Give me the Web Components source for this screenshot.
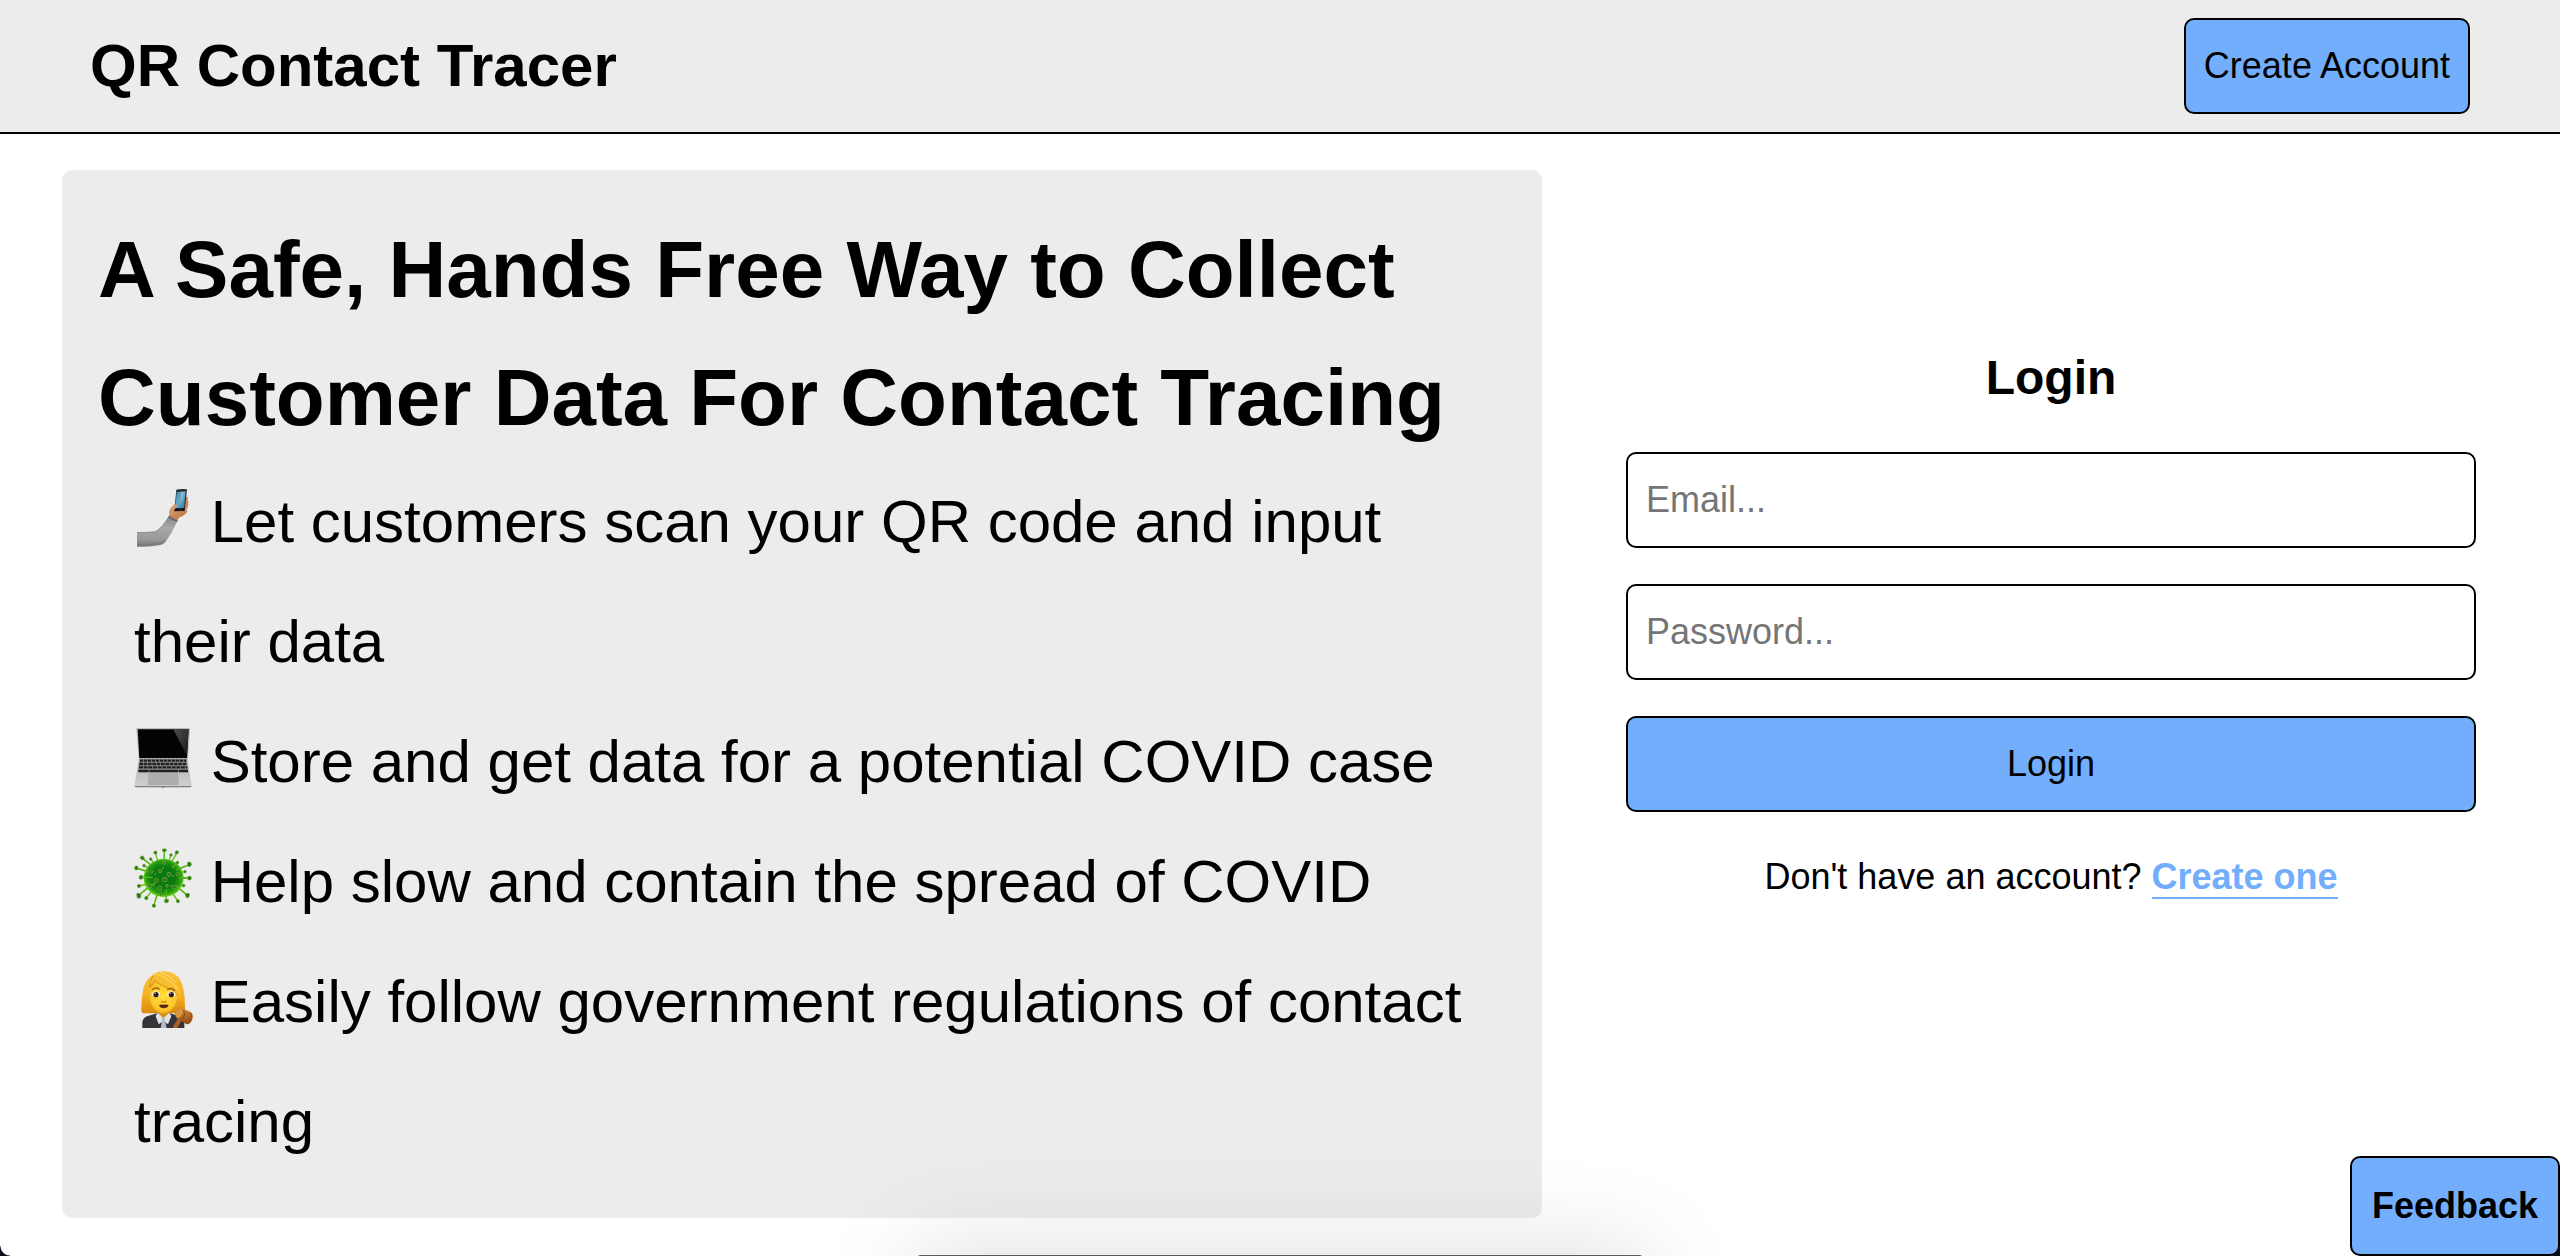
<!DOCTYPE html>
<html lang="en">
<head>
<meta charset="utf-8">
<title>QR Contact Tracer</title>
<style>
  html, body { margin: 0; }
  body {
    --panel: #ececec;
    --accent: #72aefc;
    font: 36px/56px "Liberation Sans", Arial, sans-serif;
    color: #000;
    background: #fff;
    min-height: 100vh;
  }
</style>
</head>
<body>
<qr-app></qr-app>

<template id="t-app">
  <style>
    :host { display: block; }
    main {
      display: grid;
      grid-template-columns: 1480fr 850fr;
      gap: 84px;
      padding: 36px 84px 36px 62px;
    }
    qr-login { align-self: center; padding-bottom: 144px; }
    .dock {
      position: fixed; left: 0; right: 0; bottom: -200px;
      width: 726px; height: 201px; margin: 0 auto;
      background: #5c5c5e; border-radius: 4px;
      box-shadow: 0 0 100px rgba(0,0,0,.15);
      pointer-events: none;
    }
    .corner {
      position: fixed; bottom: 0; left: 0; width: 10px; height: 10px;
      background: radial-gradient(circle at 100% 0, transparent 9px, #0b0f18 10px);
    }
    .corner.right { left: auto; right: 0; background: radial-gradient(circle at 0 0, transparent 9px, #0b0f18 10px); }
    qr-button.feedback { position: fixed; right: 0; bottom: 0; --pad: 20px; font-weight: 700; }
  </style>
  <qr-header><span>QR Contact Tracer</span><qr-button slot="action">Create Account</qr-button></qr-header>
  <main>
    <qr-pitch>
      <span slot="title">A Safe, Hands Free Way to Collect Customer Data For Contact Tracing</span>
      <qr-feature icon="selfie">Let customers scan your QR code and input their data</qr-feature>
      <qr-feature icon="laptop">Store and get data for a potential COVID case</qr-feature>
      <qr-feature icon="virus">Help slow and contain the spread of COVID</qr-feature>
      <qr-feature icon="judge">Easily follow government regulations of contact tracing</qr-feature>
    </qr-pitch>
    <qr-login></qr-login>
  </main>
  <div class="dock"></div>
  <div class="corner"></div>
  <div class="corner right"></div>
  <qr-button class="feedback">Feedback</qr-button>
</template>

<template id="t-header">
  <style>
    :host { display: block; }
    header {
      display: flex; align-items: center; justify-content: space-between;
      padding: 18px 90px; background: var(--panel); border-bottom: 2px solid #000;
    }
    h1 { margin: 0; font-size: 60px; line-height: 96px; }
  </style>
  <header><h1><slot></slot></h1><slot name="action"></slot></header>
</template>

<template id="t-button">
  <style>
    :host { display: block; }
    button {
      display: block; width: 100%; margin: 0; padding: var(--pad, 18px);
      font: inherit; color: inherit; background: var(--accent);
      border: 2px solid #000; border-radius: 10px; cursor: pointer;
    }
  </style>
  <button type="button"><slot></slot></button>
</template>

<template id="t-field">
  <style>
    :host { display: block; }
    label { position: absolute; width: 1px; height: 1px; overflow: hidden; clip-path: inset(50%); }
    input {
      display: block; box-sizing: border-box; width: 100%; height: 96px; margin: 0; padding: 18px;
      font: inherit; color: inherit; background: #fff;
      border: 2px solid #000; border-radius: 10px;
    }
    input::placeholder { color: #757575; }
  </style>
  <input id="field">
</template>

<template id="t-pitch">
  <style>
    :host { display: block; }
    section { padding: 36px; background: var(--panel); border-radius: 10px; }
    h2 { margin: 0; font-size: 80px; line-height: 128px; }
    .list { padding: 0 36px; font-size: 60px; line-height: 120px; }
  </style>
  <section>
    <h2><slot name="title"></slot></h2>
    <div class="list" role="list"><slot></slot></div>
  </section>
</template>

<template id="t-login">
  <style>
    :host { display: block; }
    form { display: flex; flex-direction: column; gap: 36px; }
    h3 { margin: 0; font-size: 48px; line-height: 77px; text-align: center; }
    p { margin: 0; line-height: 58px; text-align: center; }
    a { color: var(--accent); font-weight: 700; text-decoration: none; border-bottom: 2px solid var(--accent); }
  </style>
  <form>
    <h3>Login</h3>
    <qr-field type="email" name="Email"></qr-field>
    <qr-field type="password" name="Password"></qr-field>
    <qr-button>Login</qr-button>
    <p>Don't have an account? <a href="#create">Create one</a></p>
  </form>
</template>

<template id="t-feature">
  <style>
    :host { display: block; }
    svg { width: 60px; height: 60px; vertical-align: -6px; overflow: visible; }
  </style>
  <span class="icon"></span> <slot></slot>
</template>

<script>
  const icons = {
    selfie: `
      <defs>
        <linearGradient id="sl" x1="0" y1="0" x2="0" y2="1"><stop offset="0" stop-color="#8b8b8b"/><stop offset=".35" stop-color="#aaa8a9"/><stop offset=".75" stop-color="#999798"/><stop offset="1" stop-color="#777"/></linearGradient>
        <linearGradient id="sk" x1="0" y1="0" x2="1" y2="1"><stop offset="0" stop-color="#d9a071"/><stop offset="1" stop-color="#b87543"/></linearGradient>
        <linearGradient id="sc" x1="0" y1="0" x2="1" y2="1"><stop offset="0" stop-color="#3d7fa2"/><stop offset=".5" stop-color="#6ba9c7"/><stop offset="1" stop-color="#2f7298"/></linearGradient>
      </defs>
      <path d="M192 86q6-5 11-1 2 5-1 8 5 3 2 9 3 5-1 9 2 7-5 11l-10 4z" fill="#c98553"/>
      <path d="M51 189q32 1 55-2 9-4 18-15 11-13 20-27l28 12q-15 33-34 60-5 8-17 11-33 7-70 5z" fill="url(#sl)"/>
      <path d="M51 226q34 3 65-2 14-3 20-12" fill="none" stroke="#7a797a" stroke-width="3"/>
      <path d="M51 191q32 1 55-2 9-4 18-15" fill="none" stroke="#858485" stroke-width="2"/>
      <path d="M144 145q7 8 27 13l3-6q-19-7-26-14z" fill="#69676b"/>
      <path d="M149 139q-4-14 3-22 7-8 12-13l5 4-4 13 18 4 18-2q3 7-5 12-8 8-17 10l-7 8q-16-4-23-14z" fill="url(#sk)"/>
      <path d="M169 62q15-3 32-1l-7 64-31 1z" fill="#292a2d"/>
      <path d="M170 69l27-2-5 51-27 1z" fill="url(#sc)"/>
      <path d="M181 69l10-1-6 39z" fill="#9bc8dc" opacity=".6"/>
      <path d="M163 118l31-1-1 9-30 1z" fill="#171719"/>
      <path d="M154 120q4-12 14-14 4 2 1 8l-8 11z" fill="#d89b6b"/>
      <path d="M182 119q2 3 0 6" fill="none" stroke="#68605b" stroke-width="2"/>`,
    laptop: `
      <defs>
        <linearGradient id="ba" x1="0" y1="0" x2="0" y2="1"><stop offset="0" stop-color="#b1b1b1"/><stop offset="1" stop-color="#d0d0d0"/></linearGradient>
        <linearGradient id="gl" x1="0" y1="0" x2="1" y2="1"><stop offset="0" stop-color="#4e4e4e"/><stop offset="1" stop-color="#171717"/></linearGradient>
      </defs>
      <path d="M51 57h157q3 0 2 4l-6 90H56L49 61q-1-4 2-4z" fill="#bcbcbc"/>
      <path d="M53 61h153l-5 86H58z" fill="#030303"/>
      <path d="M160 61h46l-5 80z" fill="url(#gl)"/>
      <path d="M57 148h145l13 83q0 4-6 4H50q-8 0-7-4z" fill="url(#ba)"/>
      <path d="M59 149h141l4 41H54z" fill="#8f8f8f"/>
      <g fill="none" stroke="#202022" stroke-width="7">
        <path d="M60 155h139" stroke-dasharray="10 2"/>
        <path d="M58 165h143" stroke-dasharray="11 2"/>
        <path d="M57 175h145" stroke-dasharray="12 2"/>
        <path d="M55 186h31m2 0h87m2 0h27" stroke-width="8"/>
      </g>
      <path d="M87 193h86l3 34H84z" fill="#adadad" stroke="#9b9b9b"/>
      <path d="M43 231h172q-1 4-6 4h-75l-3 2h-4l-3-2H50q-6 0-7-4z" fill="#828282"/>`,
    virus: `
      <defs><radialGradient id="vb" cx=".5" cy=".48" r=".52"><stop offset="0" stop-color="#087315"/><stop offset=".55" stop-color="#0b7b12"/><stop offset=".82" stop-color="#279b12"/><stop offset="1" stop-color="#70d61c"/></radialGradient></defs>
      <g stroke="#66bc1f" stroke-width="4" stroke-linecap="round">
        <path d="M133 65v30M106 71l7 24M66 86l29 24M49 117l33 11M63 145h30M55 200l32-26M79 207l15-20M102 229l10-34M139 216v-32M173 215l-14-20M202 199l-31-26M191 170l-15-4M209 147h-30M195 128l-19 4M208 107l-34 14M171 71l-14 24M153 77l-5 18M92 90l11 15M72 110l16 8M57 171l28-6"/>
      </g>
      <ellipse cx="131" cy="147" rx="60" ry="57" fill="url(#vb)"/>
      <g stroke="#58b51c" stroke-width="4" stroke-linecap="round"><path d="M66 86l24 20M49 117l33 11M68 145h29M60 195l27-22M105 217l8-22M139 212v-29M197 195l-28-24M205 147h-26M202 109l-32 13M172 101l-14 15M133 75v26M89 171l16-8"/></g>
      <g fill="#2d7519" stroke="#62a529" stroke-width="2">
        <path d="M127 61q6-3 12 0l-1 6q-5 4-10 0zM101 69q4-4 9-2l1 6q-4 4-8 2zM60 86q2-6 9-5l4 6q-1 6-7 6zM44 113q5-4 9-1l1 8q-4 5-9 2zM58 141q5-4 10-1v9q-6 3-10 0zM50 194q6-3 12 2l1 7q-3 6-11 4zM75 203q6-2 9 2l-1 6q-5 3-9-1zM97 226q6-2 10 2l-1 6q-6 2-9-1zM134 212q6-3 11 0v7q-5 4-11 1zM169 213q5-3 9 1v6q-4 3-8 0zM196 196q5-5 12-2v8q-4 6-9 4zM203 143q6-3 10 0l1 7q-4 5-10 2zM202 101q6-4 11 0l1 8q-5 6-10 3zM167 66q6-2 9 2l-2 6q-6 3-9-1z"/>
        <circle cx="92" cy="90" r="4"/><circle cx="72" cy="110" r="4"/><circle cx="57" cy="171" r="5"/><circle cx="153" cy="78" r="4"/><circle cx="195" cy="128" r="4"/><circle cx="191" cy="170" r="4"/>
      </g>
      <g fill="#267719" stroke="#65a12e" stroke-width="3">
        <circle cx="132" cy="102" r="4"/><circle cx="120" cy="126" r="5"/><circle cx="95" cy="128" r="4"/><circle cx="147" cy="136" r="6"/><circle cx="173" cy="136" r="5"/><circle cx="109" cy="154" r="6"/><circle cx="134" cy="152" r="7"/><circle cx="119" cy="177" r="6"/><circle cx="141" cy="170" r="4"/><circle cx="164" cy="175" r="5"/><circle cx="90" cy="171" r="5"/><circle cx="122" cy="196" r="4"/><circle cx="172" cy="101" r="4"/>
      </g>
      <g fill="#559c27"><circle cx="106" cy="134" r="3"/><circle cx="130" cy="117" r="3"/><circle cx="159" cy="140" r="3"/><circle cx="154" cy="170" r="3"/><circle cx="102" cy="167" r="3"/></g>`,
    judge: `
      <defs>
        <linearGradient id="hr" x1="0" y1="0" x2="0" y2="1"><stop offset="0" stop-color="#f9c43c"/><stop offset=".55" stop-color="#f5b222"/><stop offset="1" stop-color="#dc8b0d"/></linearGradient>
        <radialGradient id="fc" cx=".5" cy=".45" r=".6"><stop offset="0" stop-color="#ffdc3d"/><stop offset=".75" stop-color="#fbc82a"/><stop offset="1" stop-color="#e79a14"/></radialGradient>
        <linearGradient id="gv" x1="0" y1="0" x2="0" y2="1"><stop offset="0" stop-color="#d18a35"/><stop offset="1" stop-color="#914b16"/></linearGradient>
      </defs>
      <path d="M96 79q14-13 38-12 33 1 48 28 13 24 13 83v15H69q-6-3-5-16 1-35 6-57 6-27 26-41z" fill="url(#hr)"/>
      <path d="M67 237v-16q1-15 16-20l31-9h34l28 9q15 5 17 20v16z" fill="#343438"/>
      <path d="M114 190h34l-4 18-14 20-15-22z" fill="#d99219"/>
      <path d="M113 191l17 17 18-17 6 10-10 25-14-10-14 10-9-25z" fill="#e1e4eb"/>
      <path d="M125 207h11l-1 8 5 22h-18l4-22z" fill="#b9bdc9"/>
      <path d="M88 132q2-24 19-32l48-2q17 10 18 36 0 28-16 46-12 13-27 13-16 0-28-14-14-17-14-47z" fill="url(#fc)"/>
      <path d="M99 81q10 24 43 36 26 10 39 35-2-38-18-57-20-22-48-22z" fill="#f9bd30"/>
      <path d="M99 81q-12 18-10 34 10-9 15-22 15 17 41 25 20 6 32 24" fill="none" stroke="#d98c15" stroke-width="3"/>
      <path d="M104 75q15 1 40 17 19 12 29 29M121 71q27 6 47 31" fill="none" stroke="#ffdf73" stroke-width="3"/>
      <path d="M97 122q9-9 21-2M143 121q11-7 21 3" fill="none" stroke="#9c5c13" stroke-width="4" stroke-linecap="round"/>
      <ellipse cx="108" cy="136" rx="12" ry="9" fill="#fff7dc"/><ellipse cx="154" cy="136" rx="12" ry="9" fill="#fff7dc"/>
      <circle cx="108" cy="137" r="8" fill="#422717"/><circle cx="154" cy="137" r="8" fill="#422717"/>
      <circle cx="109" cy="136" r="4" fill="#100b09"/><circle cx="153" cy="136" r="4" fill="#100b09"/>
      <circle cx="106" cy="133" r="2" fill="#fff"/><circle cx="151" cy="133" r="2" fill="#fff"/>
      <path d="M124 157q7 5 14 0" fill="none" stroke="#d98b15" stroke-width="4" stroke-linecap="round"/>
      <path d="M117 168q7-3 14-1 8-2 15 1-3 10-15 10-11 0-14-10z" fill="#643019"/>
      <path d="M120 170h23" stroke="#381b12" stroke-width="2"/>
      <path d="M160 230l18-27 9 6-15 28h-12z" fill="#aa6224"/>
      <path d="M177 175q9-2 13 4l23 11q7 5 5 16-3 15-13 19-6 2-10-2l-22-13q-10-8-7-20 3-12 11-15z" fill="url(#gv)"/>
      <path d="M168 188q5-10 14-11 9 3 6 14-4 13-14 16-10-3-6-19z" fill="#d9963e"/>
      <path d="M189 184q7 5 4 16-4 12-12 16M211 192q6 7 1 19-4 9-10 13" fill="none" stroke="#8c4a18" stroke-width="3"/>`
  };
  const iconNames = { selfie: 'Selfie', laptop: 'Laptop', virus: 'Microbe', judge: 'Judge' };

  class QrElement extends HTMLElement {
    constructor() {
      super();
      const root = this.attachShadow({ mode: 'open' });
      root.append(document.getElementById(this.constructor.template).content.cloneNode(true));
    }
  }
  class QrHeader extends QrElement { static template = 't-header'; }
  class QrButton extends QrElement { static template = 't-button'; }
  class QrPitch extends QrElement { static template = 't-pitch'; }
  class QrLogin extends QrElement { static template = 't-login'; }
  class QrApp extends QrElement { static template = 't-app'; }

  class QrField extends QrElement {
    static template = 't-field';
    connectedCallback() {
      const input = this.shadowRoot.querySelector('input');
      const name = this.getAttribute('name');
      input.type = this.getAttribute('type');
      input.placeholder = name + '...';
      input.setAttribute('aria-label', name);
    }
  }
  class QrFeature extends QrElement {
    static template = 't-feature';
    connectedCallback() {
      const name = this.getAttribute('icon');
      this.setAttribute('role', 'listitem');
      // The artwork is drawn at three units per pixel in a 60px box.
      this.shadowRoot.querySelector('.icon').innerHTML =
        `<svg viewBox="42 57 180 180" role="img" aria-label="${iconNames[name]}">${icons[name]}</svg>`;
    }
  }

  customElements.define('qr-button', QrButton);
  customElements.define('qr-field', QrField);
  customElements.define('qr-feature', QrFeature);
  customElements.define('qr-header', QrHeader);
  customElements.define('qr-pitch', QrPitch);
  customElements.define('qr-login', QrLogin);
  customElements.define('qr-app', QrApp);
</script>
</body>
</html>
